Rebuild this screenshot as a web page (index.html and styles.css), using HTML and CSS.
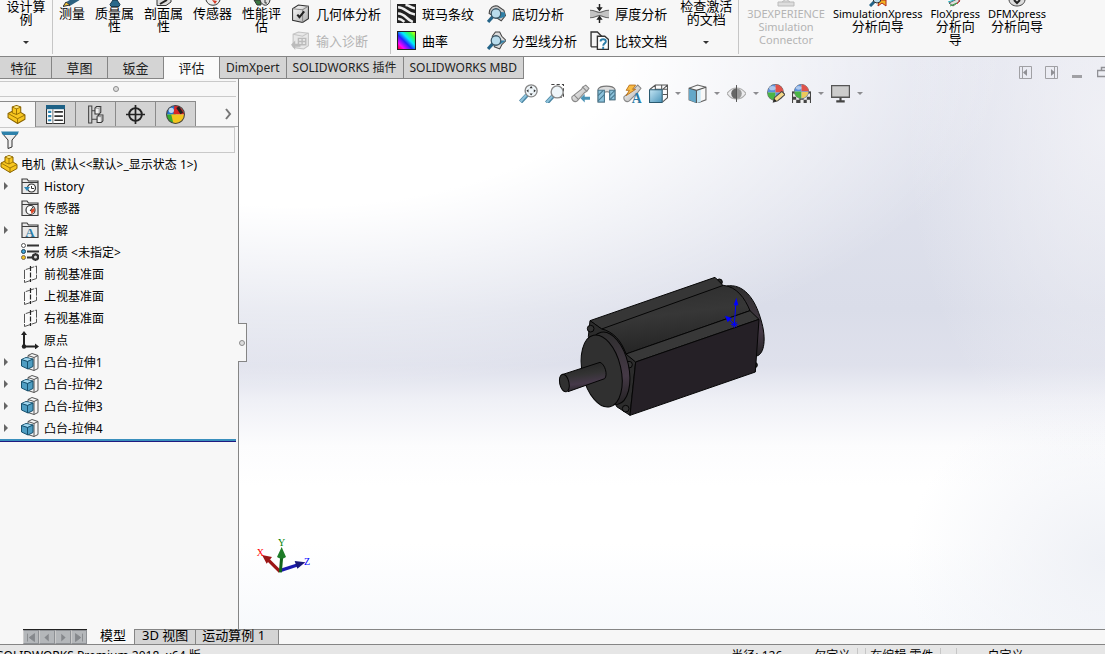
FILE: index.html
```
<!DOCTYPE html>

<html lang="zh-CN">
	<head>
		<meta charset="UTF-8">
		<meta name="viewport" content="width=device-width, initial-scale=1.0">
		<title>SOLIDWORKS Premium 2018</title>

		<link rel="stylesheet" href="styles.css">
	</head>
	<body>
		<!-- shared icons -->
		<svg class="defs" aria-hidden="true">
			<defs>
				<linearGradient id="steel" x1="0" y1="0" x2="1" y2="1">
					<stop offset="0" stop-color="#fff"/><stop offset="1" stop-color="#aaa"/>
				</linearGradient>
				<linearGradient id="blue" x1="0" y1="0" x2="1" y2="1">
					<stop offset="0" stop-color="#c4e6f5"/><stop offset="1" stop-color="#4a93b8"/>
				</linearGradient>
				<linearGradient id="rainbow" x1="0" y1="1" x2="1" y2="0">
					<stop offset="0" stop-color="#f00"/><stop offset=".2" stop-color="#f0f"/><stop offset=".42" stop-color="#22f"/><stop offset=".6" stop-color="#0ef"/><stop offset=".8" stop-color="#3f4"/><stop offset="1" stop-color="#ff0"/>
				</linearGradient>
			</defs>
			<symbol id="part" viewBox="0 0 18 18">
				<path d="M1 8l4-2V2l4-1.500L13 2v5l4 2.500v4L10 17.500 1 12z" fill="#f7c61f" stroke="#8a6400" stroke-linejoin="round"/>
				<path d="M5 2l4 1.500L13 2M9 3.500v5.500l4-2M5 6v1.500L9 9M1 8l9 5 7-3.500M10 13v4.500" fill="none" stroke="#8a6400" stroke-width=".8"/>
				<path d="M6 2l3-1 3 1-3 1z" fill="#fde98a"/>
			</symbol>
			<symbol id="folder" viewBox="0 0 18 18">
				<path d="M1 16.500V2h5l1.500 2H17v12.500z" fill="#e9e9e9" stroke="#3c3c3c" stroke-width="1.200"/>
				<path d="M1 5.500h16" stroke="#3c3c3c" fill="none"/>
			</symbol>
			<symbol id="plane" viewBox="0 0 18 18">
				<path d="M3.500 5v12.500l12-4V1z" fill="#fafafa" stroke="#555" stroke-dasharray="9 1"/>
				<path d="M9.500 1v16" stroke="#222" stroke-width="1.200" stroke-dasharray="5 1.500"/>
			</symbol>
			<symbol id="extrude" viewBox="0 0 18 18">
				<path d="M7 2.500L11 .500l6 2v13L13 17.500l-6-2z" fill="#f5f5f5" stroke="#555"/>
				<path d="M13 4.500v13M7 2.500l6 2 4-2" fill="none" stroke="#555"/>
				<path d="M.500 6.500L5 4.500l7 1.500v7.500L7 16 .500 13z" fill="#4e9dc2" stroke="#17506d"/>
				<path d="M1 6.500l4-1.500 6 1-4.500 2z" fill="#a3d7ee"/>
				<path d="M.500 6.500L6.500 8.500l5.500-2.500M6.500 8.500V16" fill="none" stroke="#17506d"/>
			</symbol>
			<symbol id="lens" viewBox="0 0 18 18">
				<path d="M7.500 10.500L1.500 17" stroke="#4b86a3" stroke-width="4"/>
				<path d="M7 10.500L1.500 16.500" stroke="#8fc3dc" stroke-width="2"/>
				<circle cx="11.500" cy="6.500" r="5.700" fill="#eff6fa" stroke="#888" stroke-width="1.300"/>
			</symbol>
			<symbol id="ball" viewBox="0 0 18 18">
				<circle cx="9" cy="8" r="7.500" fill="#ddd" stroke="#666"/>
				<path d="M9 8V.500A7.500 7.500 0 0 0 1.500 8z" fill="#5a90dc"/>
				<path d="M9 8V.500A7.500 7.500 0 0 1 16.500 8z" fill="#e0524a"/>
				<path d="M9 8H1.500A7.500 7.500 0 0 0 9 15.500z" fill="#4ab545"/>
				<path d="M9 8h7.500A7.500 7.500 0 0 1 9 15.500z" fill="#5a90dc"/>
				<ellipse cx="6" cy="4" rx="3" ry="2" fill="#fff" opacity=".5"/>
			</symbol>
			<symbol id="undercut" viewBox="0 0 18 18">
				<path d="M2 9c0-5 4-8 8-7l6 4 1.500 5-4 5-3-2z" fill="#ccc" stroke="#444"/>
				<path d="M10 7l7 1v4l-6 2z" fill="#2f7fa6"/>
				<path d="M5.500 12L1 17" stroke="#246488" stroke-width="3"/>
				<circle cx="8.500" cy="9" r="4.500" fill="#b9dcec" stroke="#3c5766" stroke-width="1.200"/>
			</symbol>
		</svg>

		<header class="ribbon">
			<div class="group first">
				<button class="tool high"><span>设计算<br>例</span><i class="caret"></i></button>
			</div>
			<div class="group">
				<button class="tool"><svg viewBox="0 0 18 7"><path d="M5 4l10-6" stroke="#2c6180" stroke-width="5"/><path d="M0 6.500l3-4.500 4 3z" fill="#edc23e" stroke="#333"/></svg><span>测量</span></button>
				<button class="tool"><svg viewBox="0 0 18 7"><path d="M7 0h4l3 4.500-1 2H5l-1-2z" fill="#29698b" stroke="#16394c"/></svg><span>质量属<br>性</span></button>
				<button class="tool"><svg viewBox="0 0 18 7"><path d="M2 0v5.500h9L16 2V0" fill="#ddd" stroke="#333"/><path d="M5 4l7-4" stroke="#222" stroke-width="2"/></svg><span>剖面属<br>性</span></button>
				<button class="tool"><svg viewBox="0 0 18 7"><path d="M2 0c2 7 12 7 14 0" fill="#eee" stroke="#333"/><path d="M8 0l3 4 2-3z" fill="#d53b25"/></svg><span>传感器</span></button>
				<button class="tool"><svg viewBox="0 0 18 7"><path d="M1 0l3 5h4V0z" fill="#3b7541" stroke="#333"/><path d="M7 0c2 7 9 7 10 0" fill="#ddd" stroke="#333"/><path d="M12 0v3h2" fill="none" stroke="#333"/></svg><span>性能评<br>估</span></button>
				<div class="stack">
					<button class="small"><svg viewBox="0 0 18 18"><path d="M1.500 4.500L7 1l9.500 1v12L11 17.500l-9.500-2z" fill="url(#steel)" stroke="#333"/><path d="M1.500 4.500l9.500 1 5.500-3.500M11 5.500v12" fill="none" stroke="#888"/><path d="M6 10l2 2.500L12.500 7" fill="none" stroke="#222" stroke-width="2"/></svg>几何体分析</button>
					<button class="small" disabled><svg viewBox="0 0 18 18"><path d="M2 3l5-2 9.500 1v12L12 17l-7-1-3-1z" fill="#e8e8e8" stroke="#c4c4c4"/><path d="M2 3l9 2 5-3" fill="none" stroke="#c4c4c4"/><path d="M7 7h7v6H7zM10.500 7v6M7 10h7" fill="none" stroke="#bbb" stroke-width="1.300"/><path d="M0 13l4-4v3h5v3H4v3z" fill="#bbb"/></svg>输入诊断</button>
				</div>
			</div>
			<div class="group">
				<div class="stack">
					<button class="small"><svg viewBox="0 0 18 18"><path d="M0 0h18v18H0z" fill="#222"/><path d="M1 3c7 0 8 6 16 7M1 9c7 0 8 6 14 8M8 1c4 0 5 3 9 3M1 14c3 0 4 1 6 3" fill="none" stroke="#eee" stroke-width="2.400"/></svg>斑马条纹</button>
					<button class="small"><svg viewBox="0 0 18 18"><path d="M.500.500h17v17H.500z" fill="url(#rainbow)" stroke="#222"/></svg>曲率</button>
				</div>
				<div class="stack">
					<button class="small"><svg viewBox="0 0 18 18"><use href="#undercut"/></svg>底切分析</button>
					<button class="small"><svg viewBox="0 0 18 18"><path d="M5 5l3-4h4l2 4 4 4-4 4-2 4-5-2z" fill="#ddd" stroke="#444"/><path d="M10 9h8l-6 4z" fill="#2f7fa6"/><path d="M5.500 12L1 17" stroke="#246488" stroke-width="3"/><circle cx="8.500" cy="9" r="4.500" fill="#b9dcec" stroke="#3c5766" stroke-width="1.200"/></svg>分型线分析</button>
				</div>
				<div class="stack">
					<button class="small"><svg viewBox="0 0 18 18"><path d="M0 6c5 0 6 2 9 2s4-2 9-2v7c-5 0-6-2-9-2s-4 2-9 2z" fill="#c4c4c4"/><path d="M0 6c5 0 6 2 9 2s4-2 9-2M0 13c5 0 6-2 9-2s4 2 9 2" fill="none" stroke="#666"/><path d="M9 0v5M9 18v-5" stroke="#222" stroke-width="1.400"/><path d="M6 3h6L9 7zM6 15h6l-3-4z" fill="#222"/></svg>厚度分析</button>
					<button class="small"><svg viewBox="0 0 18 18"><path d="M1 15V1h6l4 4v2M1 15h6" fill="#f5f5f5" stroke="#333" stroke-width="1.300"/><path d="M7 5h7l3.500 3v9.500H7z" fill="#fff" stroke="#333" stroke-width="1.300"/><path d="M10 10c0-3 5-3 5 0 0 2-2.500 1.500-2.500 4M12.500 15v2" fill="none" stroke="#2a7da8" stroke-width="1.800"/></svg>比较文档</button>
				</div>
				<button class="tool high"><span>检查激活<br>的文档</span><i class="caret"></i></button>
			</div>
			<div class="group express">
				<button class="tool" disabled><svg viewBox="0 0 18 7"><path d="M1 2h16v4H1zM5 2l4-3 4 3" fill="#ddd" stroke="#bbb"/></svg><span class="latin">3DEXPERIENCE<br>Simulation<br>Connector</span></button>
				<button class="tool"><svg viewBox="0 0 18 7"><path d="M10 0h7v6l-4-3-4 3z" fill="#f2b323" stroke="#b02a1a"/><path d="M1 6l5-5" stroke="#246488" stroke-width="3"/><circle cx="8" cy="-1" r="4" fill="#b9dcec" stroke="#333"/></svg><span class="latin">SimulationXpress</span><span>分析向导</span></button>
				<button class="tool"><svg viewBox="0 0 18 7"><path d="M3 3l8-4 3 2-7 5z" fill="#ddd" stroke="#555"/><path d="M2 2l6-2" stroke="#29b8c6"/><path d="M4 6l7-3" stroke="#38a944"/><path d="M11 4l3-4" stroke="#d33"/></svg><span class="latin">FloXpress</span><span>分析向<br>导</span></button>
				<button class="tool"><svg viewBox="0 0 18 7"><path d="M1 0c1 8 15 8 16 0" fill="#ddd" stroke="#444"/><path d="M6 0l3 3 3-3" fill="none" stroke="#222" stroke-width="2"/></svg><span class="latin">DFMXpress</span><span>分析向导</span></button>
			</div>
		</header>

		<main class="stage">
			<nav class="tabs">
				<button>特征</button>
				<button>草图</button>
				<button>钣金</button>
				<button class="active">评估</button>
				<button class="wide">DimXpert</button>
				<button class="wide">SOLIDWORKS 插件</button>
				<button class="wide">SOLIDWORKS MBD</button>
				<div class="window-buttons">
					<button aria-label="左窗格"><svg viewBox="0 0 13 13"><path d="M.500.500h12v12H.500zM3.500 0v13" fill="none" stroke="#a0a0a4"/><path d="M8 3v7L4 6.500z" fill="#909095"/></svg></button>
					<button aria-label="右窗格"><svg viewBox="0 0 13 13"><path d="M.500.500h12v12H.500zM9.500 0v13" fill="none" stroke="#a0a0a4"/><path d="M6 3v7l4-3.500z" fill="#909095"/></svg></button>
					<button aria-label="最小化"><svg viewBox="0 0 13 13"><path d="M1 9h10v3H1z" fill="#a0a0a4"/></svg></button>
					<button aria-label="还原"><svg viewBox="0 0 13 13"><path d="M4.500 4V1.500h8v6H10M.500 4.500h9v6h-9z" fill="none" stroke="#909095" stroke-width="1.500"/></svg></button>
				</div>
			</nav>
			<div class="body">
				<aside class="side">
					<div class="grip"><i class="dot"></i></div>
					<div class="panes">
						<button class="active" aria-label="设计树"><svg viewBox="0 0 18 18"><use href="#part"/></svg></button>
						<button aria-label="属性"><svg viewBox="0 0 18 18"><path d="M.500.500h17v17H.500z" fill="#fff" stroke="#333"/><path d="M0 0h18v4H0z" fill="#1d6186"/><path d="M6.500 4v14" stroke="#777"/><path d="M2 6.500h3M2 10.500h3M2 14.500h3" stroke="#2b86b5" stroke-width="2"/><path d="M8 6.500h8M8 10.500h8M8 14.500h8" stroke="#333" stroke-width="1.500"/></svg></button>
						<button aria-label="配置"><svg viewBox="0 0 18 18"><path d="M2 1h4M2 17h4M2.500 1v16M5.500 1v16M5.500 5.500h3M5.500 13.500h5" fill="none" stroke="#444"/><path d="M8.500 3l1.500-1.500h4V7l-1.500 1.500h-4zM10.500 11l1.500-1.500h4V15l-1.500 1.500h-4z" fill="#f2f2f2" stroke="#333"/><path d="M8.500 3h4v5.500M12.500 3L14 1.500M10.500 11h4v5.500M14.500 11L16 9.500" fill="none" stroke="#777" stroke-width=".7"/></svg></button>
						<button aria-label="尺寸"><svg viewBox="0 0 18 18"><circle cx="9" cy="9" r="6" fill="none" stroke="#222" stroke-width="1.800"/><path d="M9 0v18M0 9h18" stroke="#222" stroke-width="1.600"/></svg></button>
						<button aria-label="外观"><svg viewBox="0 0 18 18"><circle cx="9" cy="9" r="8.500" fill="#ddd"/><path d="M9 9V.500A8.500 8.500 0 0 0 .500 9z" fill="#2475cf"/><path d="M7 9L8 .500c5-1 9 4 9.500 8.500z" fill="#d92525"/><path d="M.500 9H9v8.500A8.500 8.500 0 0 1 .500 9z" fill="#37ab2f"/><path d="M5 9h12.500A8.500 8.500 0 0 1 7 17.500z" fill="#f3c51d"/><circle cx="9" cy="9" r="8.500" fill="none" stroke="#444"/><path d="M11 2l4 6" stroke="#222" stroke-width="3"/><circle cx="5" cy="5" r="2.500" fill="#fff" opacity=".7"/></svg></button>
						<button class="more" aria-label="更多"><svg viewBox="0 0 8 12"><path d="M2 1l4 5-4 5" fill="none" stroke="#777" stroke-width="2"/></svg></button>
					</div>
					<div class="filter"><svg viewBox="0 0 18 18"><path d="M1 2h16l-6 7v7l-4 1.500V9z" fill="#eee" stroke="#333"/><path d="M0 .500h18L16 4H2z" fill="#2d82ac"/></svg><input type="text" aria-label="过滤器"></div>
					<ul class="tree">
						<li class="root"><svg viewBox="0 0 18 18"><use href="#part"/></svg><span>电机&nbsp; (默认&lt;&lt;默认&gt;_显示状态 1&gt;)</span></li>
						<li class="open"><svg viewBox="0 0 18 18"><use href="#folder"/><circle cx="10.500" cy="11" r="4" fill="#fff" stroke="#333" stroke-width="1.200"/><path d="M10.500 9v2.500h2.500" fill="none" stroke="#333"/><path d="M3 10h6l-3 4z" fill="#2b86b5"/></svg><span>History</span></li>
						<li><svg viewBox="0 0 18 18"><use href="#folder"/><circle cx="9.500" cy="11" r="4.500" fill="#fff" stroke="#333" stroke-width="1.200"/><path d="M9.500 11l4-2v3l-3 3z" fill="#e04a2a"/><path d="M9 12l3-4" stroke="#222"/></svg><span>传感器</span></li>
						<li class="open"><svg viewBox="0 0 18 18"><use href="#folder"/><text class="letter" x="9" y="16" text-anchor="middle">A</text></svg><span>注解</span></li>
						<li><svg viewBox="0 0 18 18"><path d="M6 2.500h12M6 8.500h12M6 14.500h5" stroke="#333" stroke-width="2"/><circle cx="2.500" cy="2.500" r="2" fill="#fff" stroke="#555"/><circle cx="2.500" cy="8.500" r="2" fill="#3ba0d6" stroke="#245"/><circle cx="2.500" cy="14.500" r="2" fill="#f2c21c" stroke="#765"/><circle cx="14.500" cy="14" r="2.500" fill="none" stroke="#333" stroke-width="2.500"/><path d="M14.500 10v8M10.500 14h8M12 11.500l5 5M17 11.500l-5 5" stroke="#333" stroke-width="1.200"/><circle cx="14.500" cy="14" r="1.500" fill="#ddd"/></svg><span>材质 &lt;未指定&gt;</span></li>
						<li><svg viewBox="0 0 18 18"><use href="#plane"/></svg><span>前视基准面</span></li>
						<li><svg viewBox="0 0 18 18"><use href="#plane"/></svg><span>上视基准面</span></li>
						<li><svg viewBox="0 0 18 18"><use href="#plane"/></svg><span>右视基准面</span></li>
						<li><svg viewBox="0 0 18 18"><path d="M3 3v12.500h12" fill="none" stroke="#222" stroke-width="2"/><path d="M0 4l3-4 3 4zM14 12.500l4 3-4 3z" fill="#222"/><circle cx="3" cy="15.500" r="2.200" fill="#222"/></svg><span>原点</span></li>
						<li class="open"><svg viewBox="0 0 18 18"><use href="#extrude"/></svg><span>凸台-拉伸1</span></li>
						<li class="open"><svg viewBox="0 0 18 18"><use href="#extrude"/></svg><span>凸台-拉伸2</span></li>
						<li class="open"><svg viewBox="0 0 18 18"><use href="#extrude"/></svg><span>凸台-拉伸3</span></li>
						<li class="open"><svg viewBox="0 0 18 18"><use href="#extrude"/></svg><span>凸台-拉伸4</span></li>
					</ul>
				</aside>

				<section class="canvas">
					<button class="handle" aria-label="折叠面板"><i class="dot"></i></button>
					<div class="view-tools">
						<button aria-label="整屏显示全图"><svg viewBox="0 0 18 18"><use href="#lens"/><path d="M11.500 2l1.500 2h-3zM11.500 11L10 9h3zM7 6.500L9 5v3zM16 6.500L14 5v3z" fill="#333"/></svg></button>
						<button aria-label="局部放大"><svg viewBox="0 0 18 18"><path d="M6 .500h11.500v12H12" fill="none" stroke="#444" stroke-dasharray="3 2"/><use href="#lens" y="1"/></svg></button>
						<button aria-label="上一视图"><svg viewBox="0 0 18 18"><path d="M1 12l9-7 1-2 3-2 3 3-2 3-2 1-7 8c-3 2-6-1-5-4z" fill="url(#steel)" stroke="#888"/><path d="M11 3l4 4M3 10.500l4 4" stroke="#888"/><path d="M9 13.500l4-4v2.500h5v3h-5v2.500z" fill="#4a92b5"/></svg></button>
						<button aria-label="剖面视图"><svg viewBox="0 0 18 18"><path d="M1 5c2-4 14-4 16 0v10h-5V8c-1-1-4-1-5 0v9H1z" fill="#ddd" stroke="#777"/><path d="M1 6h6v11H1zM12 6h5v9h-5z" fill="#8cc3dc" stroke="#48788f"/><path d="M1 11l5-5M1 16l6-6M12 11l5-5M12 15l5-5" stroke="#48788f"/></svg></button>
						<button aria-label="动态注解视图"><svg viewBox="0 0 18 18"><path d="M1 12l10-8 3-3 3 3-3 4-8 8c-3 2-6-1-5-4z" fill="url(#steel)" stroke="#888"/><path d="M6 1h6L9 5h3l-9 6 3-5H3z" fill="#f7bb45" stroke="#b46a14" stroke-width=".8"/><text class="letter" x="13" y="18" text-anchor="middle">A</text></svg></button>
						<button aria-label="视图定向"><svg viewBox="0 0 18 18"><path d="M1 5l5-4h11.500v12L13 17M6 1v5M13 5l4.500-4M6 5h11M12 1v4M13 10h4" fill="none" stroke="#555"/><path d="M.500 5.500h12v12H.500z" fill="url(#blue)" stroke="#2b5a70"/></svg></button>
						<i class="caret"></i>
						<button aria-label="显示样式"><svg viewBox="0 0 18 18"><path d="M1 4l8-3 8 2v12l-8 3-8-3z" fill="#f8f8f8" stroke="#666"/><path d="M1 4l7 2v12l-7-3z" fill="#63a8c9"/><path d="M8 6l4-1v12l-4 1z" fill="#c5e6f4"/><path d="M1 4l7 2 9-3M8 6v12" fill="none" stroke="#555"/></svg></button>
						<i class="caret"></i>
						<button aria-label="隐藏/显示项目"><svg viewBox="0 0 18 18"><path d="M0 9c5-7 13-7 18 0-5 7-13 7-18 0z" fill="#ececee" stroke="#aaa"/><path d="M9 4a5 5 0 0 0 0 10z" fill="#666"/><path d="M9 4a5 5 0 0 1 0 10z" fill="#999"/><path d="M9 1v16" stroke="#555"/></svg></button>
						<i class="caret"></i>
						<button aria-label="编辑外观"><svg viewBox="0 0 18 18"><use href="#ball"/><path d="M7 17l1-4 7-6 3 3-7 6z" fill="#f5d888" stroke="#444"/><path d="M7 17l1-3 2 2z" fill="#222"/></svg></button>
						<button aria-label="应用布景"><svg viewBox="0 0 18 18"><path d="M0 7h18v11H0z" fill="#444"/><path d="M1 9h3v3H1zM4 12h3v3H4zM1 15h3v3H1zM8 15h3v3H8zM11 12h3v3h-3zM14 9h3v3h-3zM14 15h3v3h-3z" fill="#eee"/><use href="#ball" x="1" width="16" height="16"/><path d="M9 7.500h6.500A6.500 6.500 0 0 1 9 13.500z" fill="#ecc95a"/></svg></button>
						<i class="caret"></i>
						<button aria-label="视图设定"><svg viewBox="0 0 18 18"><path d="M.500 1.500h17v11H.500z" fill="#ccc" stroke="#555" stroke-width="1.300"/><path d="M9 13v3M5 16.500h8" stroke="#444" stroke-width="2"/></svg></button>
						<i class="caret"></i>
					</div>

					<!-- motor -->
					<svg class="model" viewBox="54 48 624 420">
						<defs>
							<linearGradient id="barrel" x1="0" y1="0" x2=".25" y2="1">
								<stop offset="0" stop-color="#2c2c2c"/><stop offset=".5" stop-color="#373737"/><stop offset="1" stop-color="#242424"/>
							</linearGradient>
							<linearGradient id="rim" x1="0" y1="0" x2="0" y2="1">
								<stop offset="0" stop-color="#2e2e2e"/><stop offset=".65" stop-color="#453946"/><stop offset="1" stop-color="#252325"/>
							</linearGradient>
							<linearGradient id="shaft" x1=".4" y1="0" x2=".6" y2="1">
								<stop offset="0" stop-color="#242424"/><stop offset=".4" stop-color="#333"/><stop offset=".7" stop-color="#46394a"/><stop offset="1" stop-color="#222"/>
							</linearGradient>
						</defs>
						<g stroke="#050505" stroke-width="3" stroke-linejoin="round">
							<path d="M560 78C610 70 645 115 663 180C680 235 673 283 650 288L600 200Z" fill="url(#rim)"/>
							<circle cx="538" cy="66" r="9" fill="#252525"/>
							<circle cx="644" cy="315" r="8" fill="#252525"/>
							<path d="M150 182L525 52L545 72L552 80L600 150L185 207Z" fill="#363636"/>
							<path d="M185 207L550 76C590 80 615 115 630 152L258 282C240 242 215 215 185 207Z" fill="url(#barrel)"/>
							<path d="M150 182L185 207C220 215 244 242 258 282L287 306L270 466L230 440L145 230Z" fill="#2c2c2c"/>
							<path d="M258 282L630 152L657 178L287 306Z" fill="#383838"/>
							<path d="M287 306L657 178L646 336L270 466Z" fill="#252026"/>
							<circle cx="152" cy="206" r="10" fill="#333"/>
							<circle cx="267" cy="314" r="10" fill="#333"/>
							<circle cx="257" cy="446" r="10" fill="#333"/>
							<ellipse cx="208" cy="325" rx="58" ry="111" transform="rotate(-13 208 325)" fill="url(#rim)"/>
							<ellipse cx="185" cy="333" rx="58" ry="110" transform="rotate(-13 185 333)" fill="#303030"/>
							<path d="M66 344L180 307C195 312 204 345 194 356L84 395Z" fill="url(#shaft)"/>
							<ellipse cx="73" cy="369" rx="14" ry="27" transform="rotate(-12 73 369)" fill="#303030"/>
						</g>
						<path d="M583 193L588 125M583 193L562 173M573 193h20M583 183v20M576 186l14 14M590 186l-14 14" stroke="#00f" stroke-width="3"/>
						<path d="M589 113L581 136H595ZM555 167L576 174L563 187Z" fill="#00f"/>
					</svg>

					<!-- view triad -->
					<svg class="triad" viewBox="768 33 168 114">
						<path d="M840 140L806 106" stroke="#9c1616" stroke-width="10"/>
						<path d="M786 90L816 96L800 116Z" fill="#9c1616"/>
						<path d="M840 137L892 120" stroke="#1a1aae" stroke-width="10"/>
						<path d="M916 112L884 108L892 131Z" fill="#18187c"/>
						<path d="M841 142L845 96" stroke="#12651b" stroke-width="9"/>
						<path d="M845 66L831 96Q845 106 858 96Z" fill="#1d7c28"/>
						<text x="770" y="93" fill="#f00">X</text>
						<text x="834" y="62" fill="#008000">Y</text>
						<text x="912" y="119" fill="#00f">Z</text>
					</svg>
				</section>
			</div>
		</main>

		<div class="sheets">
			<div class="arrows">
				<button aria-label="第一个"><svg viewBox="0 0 16 14"><path d="M4 3v9M12 3v9L6 7.500z" fill="#85888c" stroke="#85888c"/></svg></button>
				<button aria-label="上一个"><svg viewBox="0 0 16 14"><path d="M10 3v9L5 7.500z" fill="#85888c"/></svg></button>
				<button aria-label="下一个"><svg viewBox="0 0 16 14"><path d="M6 3v9l5-4.500z" fill="#85888c"/></svg></button>
				<button aria-label="最后一个"><svg viewBox="0 0 16 14"><path d="M12 3v9M4 3v9l6-4.500z" fill="#85888c" stroke="#85888c"/></svg></button>
			</div>
			<button class="sheet active">模型</button>
			<button class="sheet">3D 视图</button>
			<button class="sheet last">运动算例 1</button>
			<div class="rest"></div>
		</div>

		<footer class="status">
			<span class="product">SOLIDWORKS Premium 2018&nbsp; x64 版</span>
			<span class="radius">半径: 126</span>
			<span class="state">欠定义</span>
			<span class="editing">在编辑 零件</span>
			<span class="units">自定义&nbsp; &nbsp; &nbsp;▴</span>
		</footer>
	</body>
</html>
```
FILE: styles.css
```
* {
	box-sizing: border-box;
}
body {
	margin: 0;
	height: 100vh;
	display: flex;
	flex-direction: column;
	overflow: hidden;
	background-color: #f7f7f7;
	color: #000;
	font-family: "Noto Sans", "Noto Sans CJK SC", sans-serif;
	font-size: 13px;
}
button {
	margin: 0;
	padding: 0;
	border: none;
	background: none;
	color: inherit;
	font: inherit;
	white-space: nowrap;
}
button:disabled {
	color: #b4b4b4;
}
svg {
	display: block;
	flex: none;
}
svg.defs {
	position: absolute;
	width: 0;
	height: 0;
}

.caret {
	display: block;
	width: 0;
	border: 3px solid transparent;
	border-top-color: #333;
	border-bottom: none;
}
.dot {
	width: 6px;
	height: 6px;
	border: 1px solid #8c8c8c;
	border-radius: 50%;
	background-color: #ddd;
}

/* ribbon */
.ribbon {
	flex: none;
	height: 57px;
	display: flex;
	border-bottom: 1px solid #858585;
	overflow: hidden;
}
.group {
	display: flex;
	flex: none;
	margin-bottom: 2px;
	padding: 0 1px;
	border-right: 1px solid #c6c6c6;
}
.group.first {
	width: 53px;
	justify-content: center;
}
.group.express {
	border: none;
	padding: 0 4px;
}
.tool {
	display: flex;
	flex-direction: column;
	align-items: center;
	padding: 0 5px;
	line-height: 13px;
	text-align: center;
}
.express .tool {
	padding: 0 4px;
}
.tool svg {
	width: 18px;
	height: 7px;
}
.tool .caret {
	margin-top: 15px;
}
.latin {
	font-size: 11px;
}
.stack {
	display: flex;
	flex-direction: column;
	padding: 0 8px 0 5px;
}
.small {
	display: flex;
	align-items: center;
	gap: 6px;
	height: 26px;
}
.stack .small:first-child {
	height: 27px;
}
.small svg {
	width: 19px;
	height: 19px;
}

/* stage */
.stage {
	flex: 1;
	min-height: 0;
	display: flex;
	flex-direction: column;
	background:
		radial-gradient(ellipse 64% 58% at 27% 0%, #fff 0%, #fff 45%, rgba(255, 255, 255, 0) 100%),
		radial-gradient(ellipse 18% 60% at 100% 12%, rgba(243, 243, 247, .8) 0%, rgba(243, 243, 247, 0) 100%),
		radial-gradient(ellipse 18% 30% at 100% 88%, #eff1f6 0%, rgba(240, 242, 247, 0) 100%),
		linear-gradient(#e3e5ef 0%, #dadde9 44%, #dfe1ec 54%, #eff0f6 60%, #fcfcfd 68%, #fff 75%, #fff 85%, #f7f9fc 100%);
}
.tabs {
	flex: none;
	display: flex;
	height: 22px;
}
.tabs > button {
	width: 56px;
	border: solid #858585;
	border-width: 0 1px 1px 0;
	background-color: #d4d4d4;
	color: #222;
	line-height: 20px;
}
.tabs > button:first-child {
	width: 52px;
	padding-right: 4px;
}
.tabs > button.active {
	background-color: #fafafa;
	border-bottom-color: #fafafa;
}
.tabs > button.wide {
	width: auto;
	padding: 0 6px;
	font-size: 12px;
}
.window-buttons {
	display: flex;
	gap: 13px;
	margin: 9px -5px 0 auto;
}
.window-buttons svg {
	width: 13px;
	height: 13px;
}

.body {
	flex: 1;
	min-height: 0;
	display: flex;
}
.side {
	flex: none;
	width: 239px;
	border-right: 1px solid #858585;
	background-color: #f7f7f7;
}
.grip {
	display: flex;
	justify-content: center;
	align-items: center;
	height: 16px;
	margin: 2px 2px 4px 0;
	padding-right: 4px;
	border: solid #c9c9c9;
	border-width: 1px 0;
}
.panes {
	display: flex;
	height: 26px;
	border-bottom: 1px solid #aaa;
}
.panes button {
	display: flex;
	align-items: center;
	justify-content: center;
	width: 40px;
	border: 1px solid #8a8a8a;
	border-left: none;
	border-bottom: none;
	background-color: #d3d3d3;
}
.panes button.active {
	width: 36px;
	padding-right: 3px;
	margin-bottom: -1px;
	background-color: #f7f7f7;
}
.panes button.more {
	width: auto;
	margin: 0 6px 0 auto;
	border: none;
	background: none;
}
.panes svg {
	width: 19px;
	height: 19px;
}
.panes .more svg {
	width: 8px;
	height: 12px;
}
.filter {
	display: flex;
	align-items: center;
	height: 26px;
	margin-right: 3px;
	padding-left: 1px;
	border: 1px solid #c9c9c9;
	border-left: none;
}
.filter svg {
	width: 18px;
	height: 18px;
}
.filter input {
	flex: 1;
	min-width: 0;
	border: none;
	outline: none;
	background: none;
	font: inherit;
}
.tree {
	margin: 0 2px 0 0;
	padding: 0 0 2px;
	list-style: none;
	font-size: 12px;
	border-bottom: 1px solid #201a80;
	box-shadow: inset 0 -2px #3a8fbd;
}
.tree li {
	display: flex;
	align-items: center;
	gap: 5px;
	height: 22px;
	padding-left: 21px;
	white-space: nowrap;
}
.tree li.root {
	gap: 3px;
	padding-left: 0;
}
.tree li.open {
	padding-left: 4px;
}
.tree li.open::before {
	content: "";
	margin-right: 8px;
	border: 4px solid transparent;
	border-left: 4px solid #666;
	border-right: none;
}
.tree svg {
	width: 18px;
	height: 18px;
}
.letter {
	font: bold 13px "Liberation Serif", serif;
	fill: #2b7ba5;
}

/* canvas */
.canvas {
	position: relative;
	flex: 1;
	min-width: 0;
}
.handle {
	position: absolute;
	left: -1px;
	top: 244px;
	display: flex;
	align-items: center;
	justify-content: center;
	width: 9px;
	height: 39px;
	border: 1px solid #858585;
	border-left: none;
	background-color: #f7f7f7;
}
.handle .dot {
	flex: none;
}
.view-tools {
	display: flex;
	align-items: center;
	justify-content: center;
	gap: 7px;
	padding: 5px 0 0 38px;
}
.view-tools svg {
	width: 19px;
	height: 19px;
}
.view-tools .caret {
	border-top-color: #8c8c90;
}
.model {
	position: absolute;
	left: calc(50% - 114px);
	top: calc(50% - 78px);
	width: 208px;
	height: 140px;
}
.triad {
	position: absolute;
	left: 17px;
	bottom: 55px;
	width: 56px;
	height: 38px;
	font: 30px "Liberation Serif", serif;
}

/* bottom bars */
.sheets {
	flex: none;
	display: flex;
	height: 16px;
	border-bottom: 1px solid #858585;
}
.arrows {
	display: flex;
	margin-left: 23px;
	border-top: 1px solid #222;
}
.arrows button {
	width: 16px;
	border: 1px solid #8e9195;
	border-left-color: #ccc;
	background-color: #b4b7ba;
}
.sheet {
	padding: 0 7px 3px;
	border-right: 1px solid #858585;
	border-top: 1px solid #858585;
	background-color: #d4d4d4;
	line-height: 11px;
}
.sheet.active {
	padding: 0 8px 2px 13px;
	border-top: none;
	background-color: #f7f7f7;
}
.sheet.last {
	padding-left: 6px;
	padding-right: 13px;
}
.rest {
	flex: 1;
	border-top: 1px solid #858585;
}
.status {
	flex: none;
	display: flex;
	height: 9px;
	padding-top: 3px;
	overflow: hidden;
	background-color: #e6e6e6;
	font-size: 12px;
	line-height: 16px;
	white-space: nowrap;
}
.product {
	margin-left: -3px;
}
.radius {
	margin-left: auto;
	padding-right: 32px;
}
.state {
	padding-right: 7px;
	border-right: 1px solid #c6c6c6;
}
.editing {
	margin: 0 15px 0 7px;
	padding: 0 7px 0 4px;
	border: solid #c6c6c6;
	border-width: 0 1px;
}
.units {
	padding: 0 60px 0 30px;
	border-left: 1px solid #c6c6c6;
}
```
